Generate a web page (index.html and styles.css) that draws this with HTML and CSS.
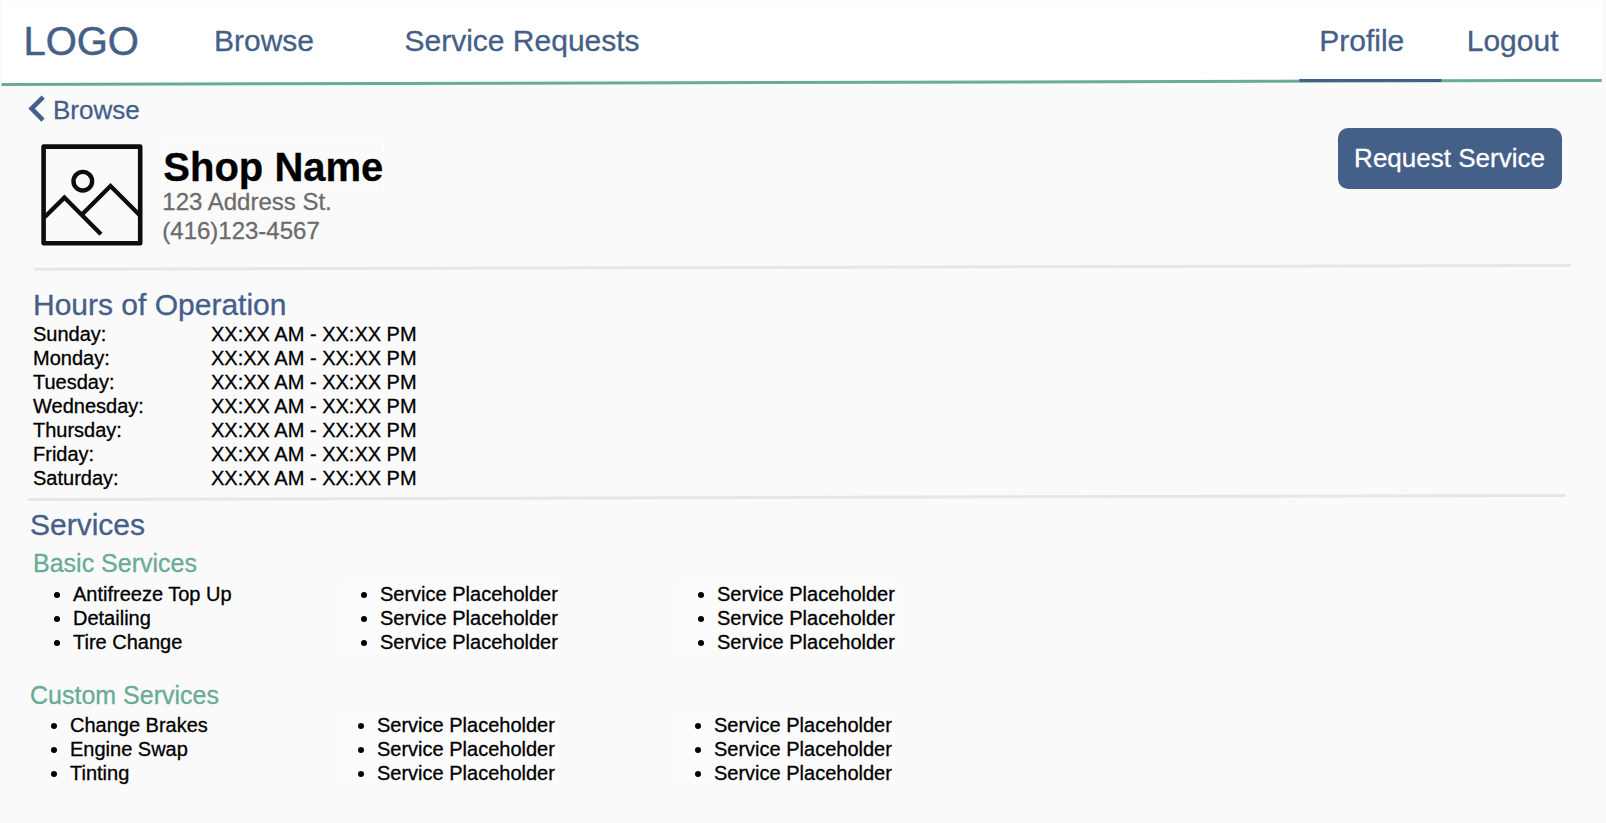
FILE: index.html
```
<!DOCTYPE html>
<html lang="en">
<head>
<meta charset="utf-8">
<title>Shop Name</title>
<link rel="stylesheet" href="styles.css">
</head>
<body>
<header class="topbar">
  <div class="logo">LOGO</div>
  <nav class="nav">
    <a class="nav-browse">Browse</a>
    <a class="nav-requests">Service Requests</a>
    <a class="nav-profile">Profile</a>
    <a class="nav-logout">Logout</a>
  </nav>
</header>
<svg class="rule" width="1606" height="10" viewBox="0 77 1606 10">
  <polygon points="2,77 1601,77 1601,80.5 2,84.5" fill="#fff"/>
  <line x1="1.5" y1="84.5" x2="1601.7" y2="80.4" stroke="#69ac95" stroke-width="3"/>
  <line x1="1299.3" y1="80.5" x2="1441.5" y2="80.5" stroke="#446088" stroke-width="3"/>
</svg>
<main>
  <a class="back">
    <svg width="18" height="30" viewBox="28 94 18 30"><path d="M43.2 97.2 31.6 108.6 43 120.2" fill="none" stroke="#446088" stroke-width="4.6"/></svg>
    <span>Browse</span>
  </a>
  <section class="shop">
    <svg class="picture" width="102" height="102" viewBox="41 144 102 102" fill="none" stroke="#0d0d0d" stroke-width="4.4">
      <rect x="43.6" y="146.6" width="96.6" height="96.6" stroke-linejoin="round" stroke-width="4.6"/>
      <circle cx="82.8" cy="181.2" r="9.3"/>
      <path d="M44.5 217.2 64.4 197.6 101 234.2M82.5 214 110.5 186 140 215.5" stroke-width="4.3"/>
    </svg>
    <div class="info">
      <h1>Shop Name</h1>
      <p>123 Address St.</p>
      <p>(416)123-4567</p>
    </div>
    <button class="request">Request Service</button>
  </section>
  <svg class="rule" width="1606" height="10" viewBox="0 262 1606 10"><line x1="33.5" y1="269.3" x2="1570.7" y2="265.4" stroke="#e6e6e6" stroke-width="3"/></svg>
  <section class="hours">
    <h2>Hours of Operation</h2>
    <dl>
      <dt>Sunday:</dt><dd>XX:XX AM - XX:XX PM</dd>
      <dt>Monday:</dt><dd>XX:XX AM - XX:XX PM</dd>
      <dt>Tuesday:</dt><dd>XX:XX AM - XX:XX PM</dd>
      <dt>Wednesday:</dt><dd>XX:XX AM - XX:XX PM</dd>
      <dt>Thursday:</dt><dd>XX:XX AM - XX:XX PM</dd>
      <dt>Friday:</dt><dd>XX:XX AM - XX:XX PM</dd>
      <dt>Saturday:</dt><dd>XX:XX AM - XX:XX PM</dd>
    </dl>
  </section>
  <svg class="rule" width="1606" height="10" viewBox="0 493 1606 10"><line x1="28" y1="499.5" x2="1565" y2="495.4" stroke="#e6e6e6" stroke-width="3"/></svg>
  <section class="services">
    <h2>Services</h2>
    <div class="group basic">
      <h3>Basic Services</h3>
      <div class="columns">
        <ul><li>Antifreeze Top Up</li><li>Detailing</li><li>Tire Change</li></ul>
        <ul><li>Service Placeholder</li><li>Service Placeholder</li><li>Service Placeholder</li></ul>
        <ul><li>Service Placeholder</li><li>Service Placeholder</li><li>Service Placeholder</li></ul>
      </div>
    </div>
    <div class="group custom">
      <h3>Custom Services</h3>
      <div class="columns">
        <ul><li>Change Brakes</li><li>Engine Swap</li><li>Tinting</li></ul>
        <ul><li>Service Placeholder</li><li>Service Placeholder</li><li>Service Placeholder</li></ul>
        <ul><li>Service Placeholder</li><li>Service Placeholder</li><li>Service Placeholder</li></ul>
      </div>
    </div>
  </section>
</main>
</body>
</html>
```
FILE: styles.css
```
* { box-sizing: border-box; margin: 0; padding: 0; }
body {
  width: 1606px;
  height: 823px;
  overflow: hidden;
  padding-top: 1px;
  background: #fafafa;
  color: #000;
  font-family: "Liberation Sans", Arial, sans-serif;
  font-size: 20px;
  line-height: 24px;
  -webkit-text-stroke-width: 0.3px;
}
.topbar {
  display: flex;
  height: 76px;
  margin: 0 5px 0 2px;
  padding-left: 21.4px;
  background: #fff;
  color: #446088;
  white-space: nowrap;
}
.logo { width: 190.6px; padding-top: 17px; font-size: 40px; line-height: 46px; -webkit-text-stroke-width: 0.5px; }
.nav { display: flex; flex: 1; padding: 23px 39.3px 0 0; font-size: 30px; line-height: 34px; }
.nav-browse { width: 190.5px; }
.nav-profile { margin-left: auto; width: 147.5px; }
.nav-logout { width: 95px; }
.rule { display: block; }
.back {
  display: flex;
  gap: 7px;
  height: 37px;
  padding: 7px 0 0 28px;
  color: #446088;
  font-size: 26px;
  line-height: 33px;
}
.shop { display: flex; align-items: flex-start; height: 138px; padding: 0 44.5px 0 41px; }
.picture { margin-top: 20px; }
.info { margin: 18px 0 0 19.3px; color: #6b6b6b; font-size: 24px; line-height: 29px; }
.info h1 {
  width: 222px;
  height: 50px;
  margin-bottom: -5px;
  border: 1px solid #fff;
  color: #000;
  font-size: 40px;
  line-height: 48px;
  white-space: nowrap;
}
.request {
  width: 224px;
  height: 60.5px;
  margin: 4px 0 0 auto;
  border: 0;
  border-radius: 10px;
  background: #446088;
  color: #fff;
  font: 26px/30px "Liberation Sans", Arial, sans-serif;
  padding-bottom: 1px;
  -webkit-text-stroke-width: 0.3px;
}
h2 { color: #446088; font-size: 30px; font-weight: normal; line-height: 34px; }
.hours { height: 221px; padding: 16px 0 0 33px; }
.hours dl { display: grid; grid-template-columns: 178px 210px; }
.services { padding: 5px 0 0 30px; }
h3 { color: #69ac95; font-size: 25px; font-weight: normal; line-height: 30px; }
.basic { padding: 6px 0 0 3px; }
.basic .columns { margin-top: 4px; }
.custom { padding-top: 26px; }
.custom .columns { margin-top: 3px; }
.columns { display: flex; }
ul { width: 221px; padding-left: 40px; list-style: none; }
ul:nth-child(2) { margin-left: 86px; background: #fbfbfb; }
ul:nth-child(3) { margin-left: 116px; background: #fbfbfb; }
li { display: flex; align-items: center; margin-left: -19px; }
li::before {
  content: "";
  width: 6px;
  height: 6px;
  margin: 2px 13px 0 0;
  border-radius: 50%;
  background: #000;
}
```
